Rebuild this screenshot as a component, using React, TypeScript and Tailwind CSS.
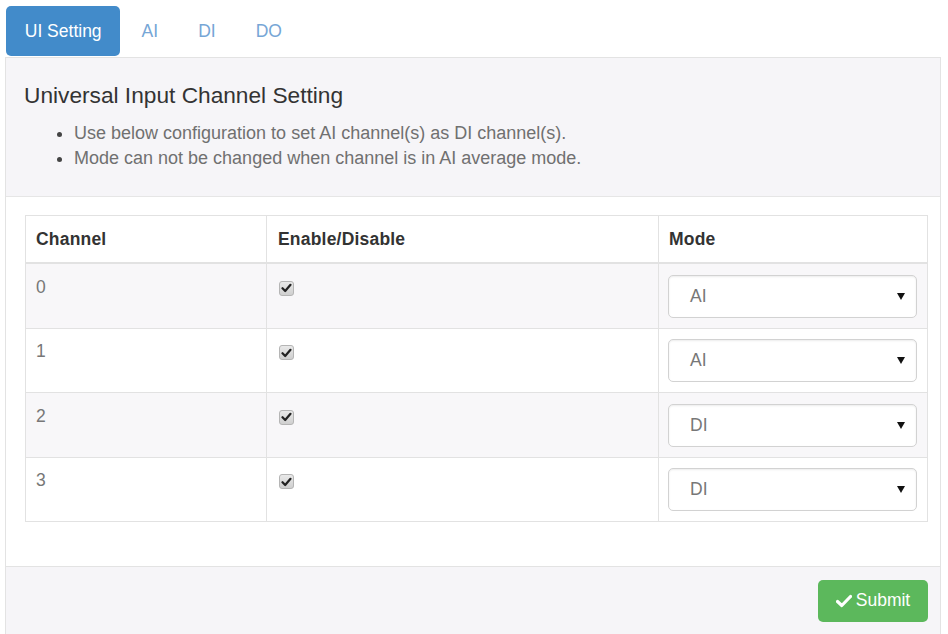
import React from 'react';

type Row = { channel: number; enabled: boolean; mode: 'AI' | 'DI' };

const rows: Row[] = [
  { channel: 0, enabled: true, mode: 'AI' },
  { channel: 1, enabled: true, mode: 'AI' },
  { channel: 2, enabled: true, mode: 'DI' },
  { channel: 3, enabled: true, mode: 'DI' },
];

const tabs = ['UI Setting', 'AI', 'DI', 'DO'];

// grey old-style checkbox with a dark tick
const Check = ({ checked }: { checked: boolean }) => (
  <span className="mt-[6px] ml-[2px] inline-flex h-[15px] w-[15px] items-center justify-center rounded-[3px] border border-[#b5b5b5] bg-gradient-to-b from-[#e9e9e9] to-[#cfcfcf]">
    {checked && (
      <svg width="11" height="10" viewBox="0 0 11 10">
        <path d="M1.5 5.2 L4.2 8 L9.5 1.8" fill="none" stroke="#222" strokeWidth="2.2" strokeLinecap="round" strokeLinejoin="round" />
      </svg>
    )}
  </span>
);

const ModeSelect = ({ value }: { value: string }) => (
  <div className="flex h-[43px] w-[249px] items-center justify-between rounded-[5px] border border-[#d2d2d2] bg-white pl-[21px] pr-[11px] text-[#777] shadow-[inset_0_1px_2px_rgba(0,0,0,0.08)]">
    <span>{value}</span>
    <svg width="8" height="7" viewBox="0 0 8 7">
      <path d="M0 0 H8 L4 7 Z" fill="#111" />
    </svg>
  </div>
);

export default function App() {
  return (
    <div className="min-h-screen bg-white text-[17.5px] leading-[25px] text-[#555]" style={{ fontFamily: '"Liberation Sans", Arial, sans-serif' }}>
      {/* pill tabs */}
      <div className="ml-[6px] flex gap-[2.5px] pt-[6px]">
        {tabs.map((t, i) => (
          <div
            key={t}
            className={
              i === 0
                ? 'rounded-[5px] bg-[#428bca] px-[18.75px] py-[12.5px] text-white'
                : 'rounded-[5px] px-[18.75px] py-[12.5px] text-[#76a6d6]'
            }
          >
            {t}
          </div>
        ))}
      </div>

      {/* settings panel */}
      <div className="mt-px ml-[5px] w-[936px] border border-[#e3e3e3]">
        <div className="border-b border-[#e6e6e6] bg-[#f6f5f8] px-[18px] pt-[25px] pb-[12.5px]">
          <h4 className="text-[22.7px] leading-[25px] text-[#333]">Universal Input Channel Setting</h4>
          <ul className="mt-[12.5px] mb-[12.5px] list-disc pl-[50px] text-[18px] leading-[25px] text-[#707070] marker:text-[#444]">
            <li>Use below configuration to set AI channel(s) as DI channel(s).</li>
            <li>Mode can not be changed when channel is in AI average mode.</li>
          </ul>
        </div>

        <div className="pt-[18.75px] pr-[12px] pb-[44px] pl-[19px]">
          <table className="w-full table-fixed border-collapse border border-[#e2e2e2]">
            <colgroup>
              <col className="w-[241px]" />
              <col className="w-[392px]" />
              <col />
            </colgroup>
            <thead>
              <tr className="border-b-2 border-[#e2e2e2] text-left">
                <th className="border-r border-[#e2e2e2] px-[10px] py-[10.5px] font-bold tracking-[0.2px] text-[#333]">Channel</th>
                <th className="border-r border-[#e2e2e2] px-[11px] py-[10.5px] font-bold tracking-[0.2px] text-[#333]">Enable/Disable</th>
                <th className="px-[10px] py-[10.5px] font-bold tracking-[0.2px] text-[#333]">Mode</th>
              </tr>
            </thead>
            <tbody>
              {rows.map((r, i) => (
                <tr key={r.channel} className={(i % 2 === 0 ? 'bg-[#f8f7f9] ' : 'bg-white ') + 'border-t border-[#e2e2e2] align-top'}>
                  <td className="border-r border-[#e2e2e2] px-[10px] py-[10.25px] text-[#777]">{r.channel}</td>
                  <td className="border-r border-[#e2e2e2] px-[10px] py-[10.25px]">
                    <Check checked={r.enabled} />
                  </td>
                  <td className="px-[9px] py-[10.25px]">
                    <ModeSelect value={r.mode} />
                  </td>
                </tr>
              ))}
            </tbody>
          </table>
        </div>

        <div className="flex justify-end border-t border-[#e3e3e3] bg-[#f6f5f8] px-[12px] py-[12.5px]">
          <button className="flex h-[42px] w-[110px] items-center justify-center gap-[4px] rounded-[5px] bg-[#5cb85c] text-white">
            <svg width="16" height="14" viewBox="0 0 16 14">
              <path d="M1.5 7.5 L5.8 11.5 L14.5 2.5" fill="none" stroke="#fff" strokeWidth="3.2" strokeLinecap="round" strokeLinejoin="round" />
            </svg>
            Submit
          </button>
        </div>
      </div>
    </div>
  );
}
